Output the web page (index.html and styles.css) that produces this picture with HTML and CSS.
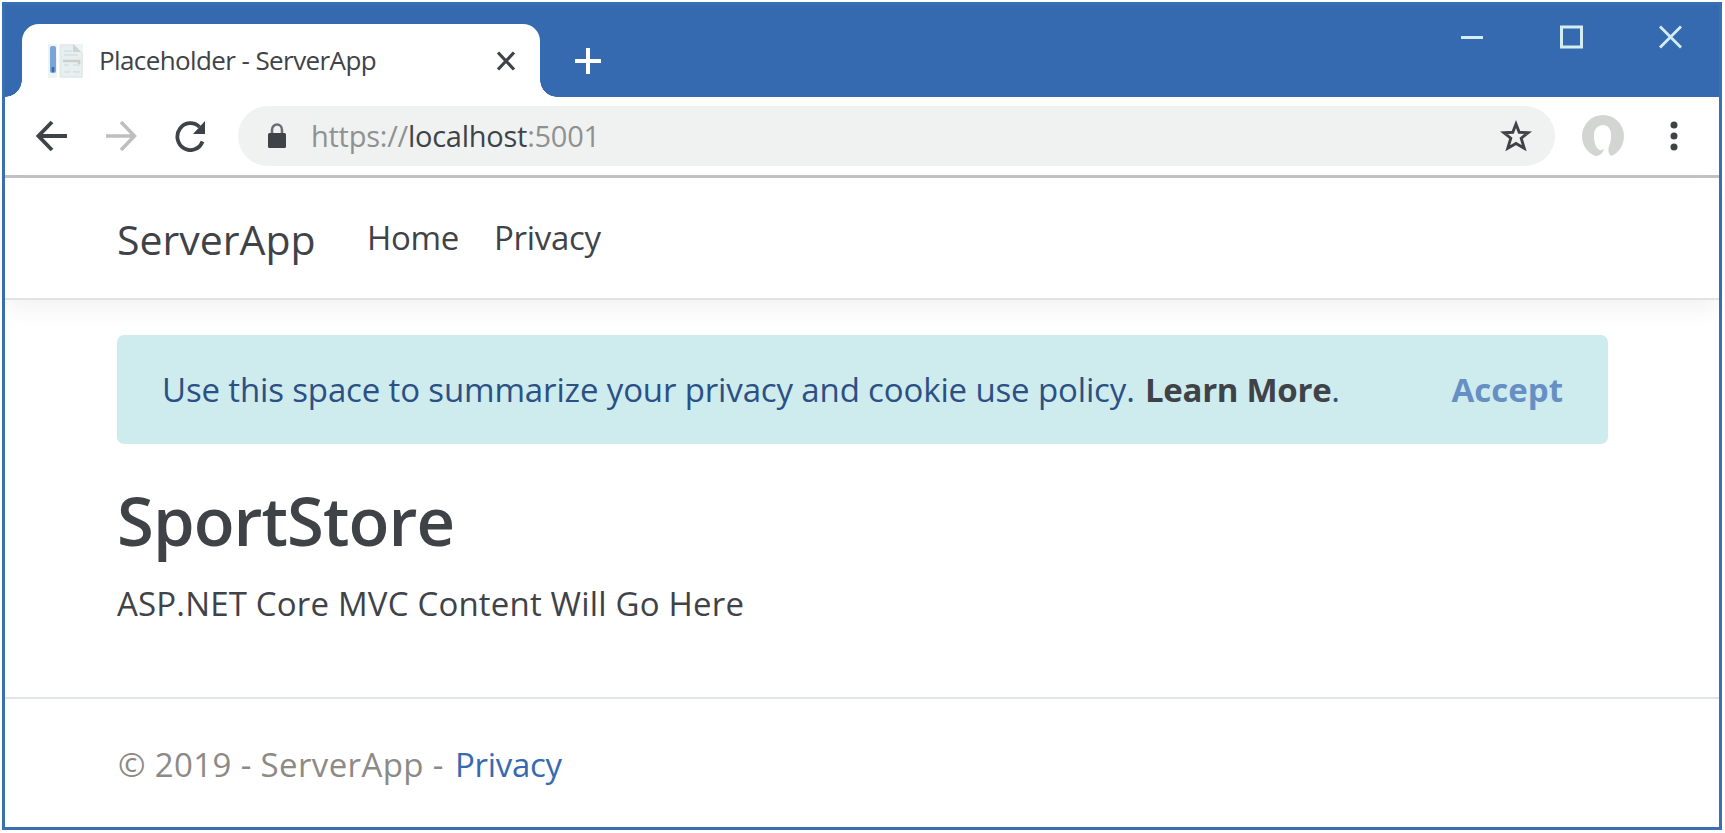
FILE: index.html
```html
<!DOCTYPE html>
<html lang="en">
<head>
<meta charset="utf-8">
<title>Placeholder - ServerApp</title>
<link rel="stylesheet" href="styles.css">
</head>
<body>
<div class="window">
  <div class="titlebar">
    <div class="tab">
      <svg class="favicon" width="36" height="36" viewBox="0 0 36 36">
        <rect x="0" y="1" width="35" height="34" fill="#eef3f3"/>
        <rect x="2" y="3" width="6" height="27" rx="2" fill="#7aa3d6"/>
        <path d="M5 24v5" stroke="#366ab0" stroke-width="2.500"/>
        <path d="M10 0v36" stroke="#fff" stroke-width="2"/>
        <path d="M13 2h13l8 8v24H13z" fill="#e9efef" stroke="#dbe5e5"/>
        <path d="M25 1v8h8" fill="#cfd3d2"/>
        <path d="M16 8h8M16 12h14M16 22h5M25 22h7M16 29h6M25 29h7" stroke="#cfe3e6" stroke-width="1.500"/>
        <path d="M15 18h16v3" fill="none" stroke="#c9cfcd" stroke-width="2.500"/>
      </svg>
      <span class="tab-title">Placeholder - ServerApp</span>
      <svg class="tab-close" width="20" height="20" viewBox="0 0 20 20"><path d="M2 1.500l16 17M18 1.500L2 18.500" stroke="#3f4348" stroke-width="3.200"/></svg>
    </div>
    <svg class="new-tab" width="26" height="26" viewBox="0 0 26 26"><path d="M13 0v26M0 13h26" stroke="#fff" stroke-width="4"/></svg>
    <div class="controls">
      <svg width="23" height="24" viewBox="0 0 23 24"><path d="M0 12.500h22" stroke="#d3eef2" stroke-width="3"/></svg>
      <svg width="23" height="24" viewBox="0 0 23 24"><rect x="1.500" y="2" width="20" height="20" fill="none" stroke="#d3eef2" stroke-width="3"/></svg>
      <svg width="23" height="24" viewBox="0 0 23 24"><path d="M1 1.500l21 21M22 1.500l-21 21" stroke="#d3eef2" stroke-width="2.800"/></svg>
    </div>
  </div>
  <div class="toolbar">
    <svg class="back" width="32" height="32" viewBox="0 0 32 32"><path d="M31 16H3M16 2L2.500 16 16 30" fill="none" stroke="#3f4348" stroke-width="3.800"/></svg>
    <svg class="forward" width="32" height="32" viewBox="0 0 32 32"><path d="M1 16h28M16 2l13.500 14L16 30" fill="none" stroke="#bdbfbd" stroke-width="3.500"/></svg>
    <svg class="reload" width="32" height="32" viewBox="0 0 32 32"><path d="M28.500 21.500A13 13.500 0 1 1 25.500 7" fill="none" stroke="#3f4348" stroke-width="3.800"/><path d="M31 1v13H19z" fill="#3f4348"/></svg>
    <div class="address">
      <svg class="lock" width="20" height="26" viewBox="0 0 20 26"><path d="M5 11V7a5 5.500 0 0 1 10 0V11" fill="none" stroke="#6b6e70" stroke-width="2.600"/><rect x="1" y="10" width="18" height="15" rx="1.500" fill="#3f4348"/></svg>
      <span class="url">https://<b>localhost</b>:5001</span>
      <svg class="star" width="32" height="32" viewBox="0 0 32 32"><path d="M16 4l3.200 8.300 9 .4-7 5.500 3 10L16 23.500 7.800 28.200l3-10-7-5.500 9-.4z" fill="none" stroke="#3f4348" stroke-width="2.900"/></svg>
    </div>
    <svg class="avatar" width="44" height="44" viewBox="0 0 44 44"><path d="M14 42C5 38 1 30 1 22a21 21 0 0 1 42 0c0 9-5 17-13 20-3-3-3-6-2-10 2-4 2-8 2-11 0-6-3-10-8-10s-9 4-9 10c0 6 1 11 4 14 2 2 4 1 6 0-1 4-4 7-8 7z" fill="#d3d5d3"/></svg>
    <svg class="menu" width="8" height="30" viewBox="0 0 8 30"><circle cx="4" cy="4" r="3.500" fill="#3f4348"/><circle cx="4" cy="15" r="3.500" fill="#3f4348"/><circle cx="4" cy="26" r="3.500" fill="#3f4348"/></svg>
  </div>
  <header class="navbar">
    <a class="brand">ServerApp</a>
    <a class="nav-home">Home</a>
    <a class="nav-privacy">Privacy</a>
  </header>
  <main class="main">
    <div class="alert">
      <span class="policy">Use this space to summarize your privacy and cookie use policy.</span>
      <span class="learn"><b>Learn More</b>.</span>
      <span class="accept">Accept</span>
    </div>
    <h1 class="heading">SportStore</h1>
    <p class="lead">ASP.NET Core MVC Content Will Go Here</p>
  </main>
  <footer class="footer"><span class="copy">© 2019 - ServerApp -</span><a class="foot-link">Privacy</a></footer>
</div>
</body>
</html>
```
FILE: styles.css
```css
* { box-sizing: border-box; }
body { margin: 0; background: #fff; font-family: "Open Sans", "Noto Sans", sans-serif; color: #3f4348; }
svg { display: block; flex: none; }
.window { width: 1720px; height: 828px; margin: 2px 0 0 2px; border: 3px solid #3b6fb3; display: flex; flex-direction: column; white-space: nowrap; }
.titlebar { height: 92px; flex: none; background: #366ab0; display: flex; align-items: flex-start; }
.tab { position: relative; width: 518px; height: 73px; margin: 19px 0 0 17px; background: #fff; border-radius: 17px 17px 0 0; display: flex; align-items: center; padding: 0 24px 0 26px; }
.tab::before, .tab::after { content: ""; position: absolute; bottom: 0; width: 17px; height: 17px; }
.tab::before { left: -17px; background: radial-gradient(circle at 0 0, transparent 16.5px, #fff 17px); }
.tab::after { right: -17px; background: radial-gradient(circle at 100% 0, transparent 16.5px, #fff 17px); }
.tab-title { margin: -2px 0 0 15px; font-size: 26px; letter-spacing: -0.6px; }
.tab-close { margin-left: auto; }
.new-tab { margin: 43px 0 0 35px; }
.controls { display: flex; gap: 76px; margin: 20px 37px 0 auto; }
.toolbar { height: 81px; flex: none; display: flex; align-items: center; border-bottom: 3px solid #c3c4c1; padding: 0 41px 0 31px; }
.forward { margin-left: 37px; }
.reload { margin-left: 37px; }
.address { flex: 1; height: 60px; margin-left: 32px; border-radius: 30px; background: #f0f2f2; display: flex; align-items: center; padding: 0 23px 0 29px; }
.url { margin: -1px 0 0 24px; font-size: 29px; letter-spacing: -0.25px; color: #8f9191; }
.url b { font-weight: 400; color: #3f4348; }
.star { margin-left: auto; }
.avatar { margin-left: 26px; }
.menu { margin-left: 45px; }
.navbar { height: 122px; flex: none; display: flex; align-items: flex-start; padding: 31px 0 0 112px; border-bottom: 2px solid #dfe5e4; box-shadow: 0 8px 22px rgba(0, 0, 0, 0.06); }
.brand { font-size: 41px; line-height: 60px; width: 250px; }
.nav-home, .nav-privacy { font-size: 33px; line-height: 57px; letter-spacing: -0.3px; }
.nav-home { width: 127px; }
.main { flex: 1; padding: 35px 112px 0; }
.alert { height: 109px; width: 1491px; border-radius: 7px; background: #ceebee; display: flex; align-items: center; padding: 0 45px; font-size: 33px; color: #2c5084; }
.policy { width: 983px; letter-spacing: -0.14px; }
.learn { letter-spacing: -0.3px; }
.learn b { color: #3f4348; }
.accept { margin-left: auto; font-weight: 700; color: #668fc3; }
.heading { margin: 36px 0 0; font-size: 67px; line-height: 80px; font-weight: 600; letter-spacing: -0.95px; }
.lead { margin: 21px 0 0; font-size: 33px; line-height: 46px; letter-spacing: 0.18px; }
.footer { height: 130px; flex: none; border-top: 2px solid #dfe5e4; padding: 43px 0 0 113px; display: flex; font-size: 33px; line-height: 46px; color: #8d8a86; }
.copy { width: 337px; letter-spacing: 0.37px; }
.foot-link { color: #366ab0; letter-spacing: -0.3px; }
```
